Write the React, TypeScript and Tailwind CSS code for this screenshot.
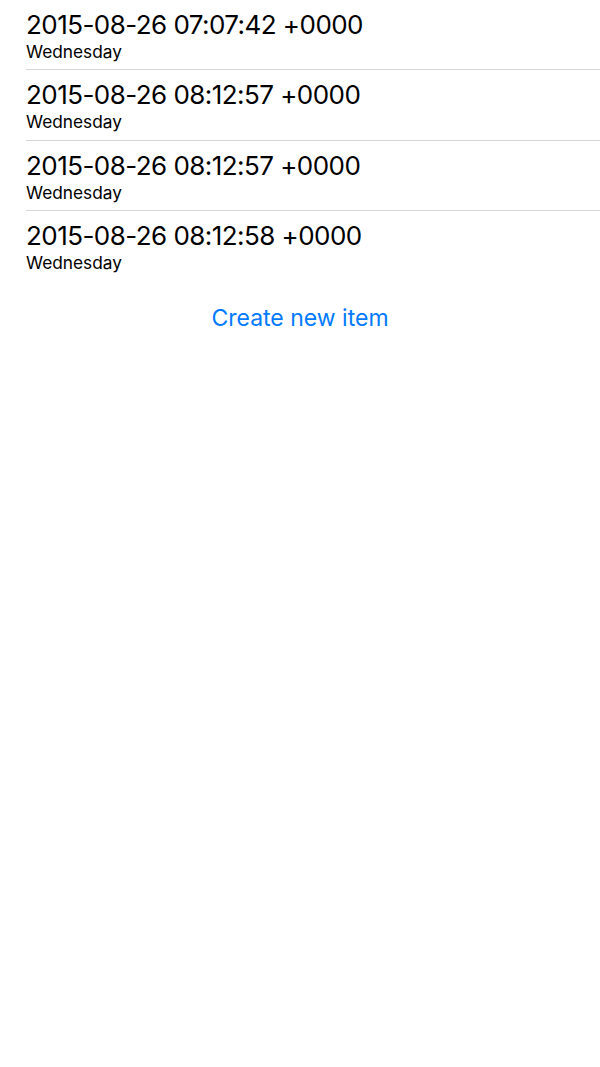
import React from "react";

const items = [
  "2015-08-26 07:07:42 +0000",
  "2015-08-26 08:12:57 +0000",
  "2015-08-26 08:12:57 +0000",
  "2015-08-26 08:12:58 +0000",
];

export default function App() {
  return (
    <div className="min-h-[1067px] w-[600px] bg-white text-black" style={{ fontFamily: "Inter, 'Noto Sans', sans-serif" }}>
      <div className="pl-[26px]">
        {items.map((t, i) => (
          <div
            key={i}
            className={`flex h-[70.3px] flex-col pt-[10px] ${i < items.length - 1 ? "border-b border-[#d6d6d9]" : ""}`}
          >
            <div className="text-[26px] leading-[30px] tracking-[-0.55px]">{t}</div>
            <div className="text-[17.3px] leading-[20px] mt-[2px]">Wednesday</div>
          </div>
        ))}
      </div>
      <div className="flex justify-center pt-[21px]">
        <button className="text-[23px] leading-[32px] text-[#007aff]">Create new item</button>
      </div>
    </div>
  );
}
